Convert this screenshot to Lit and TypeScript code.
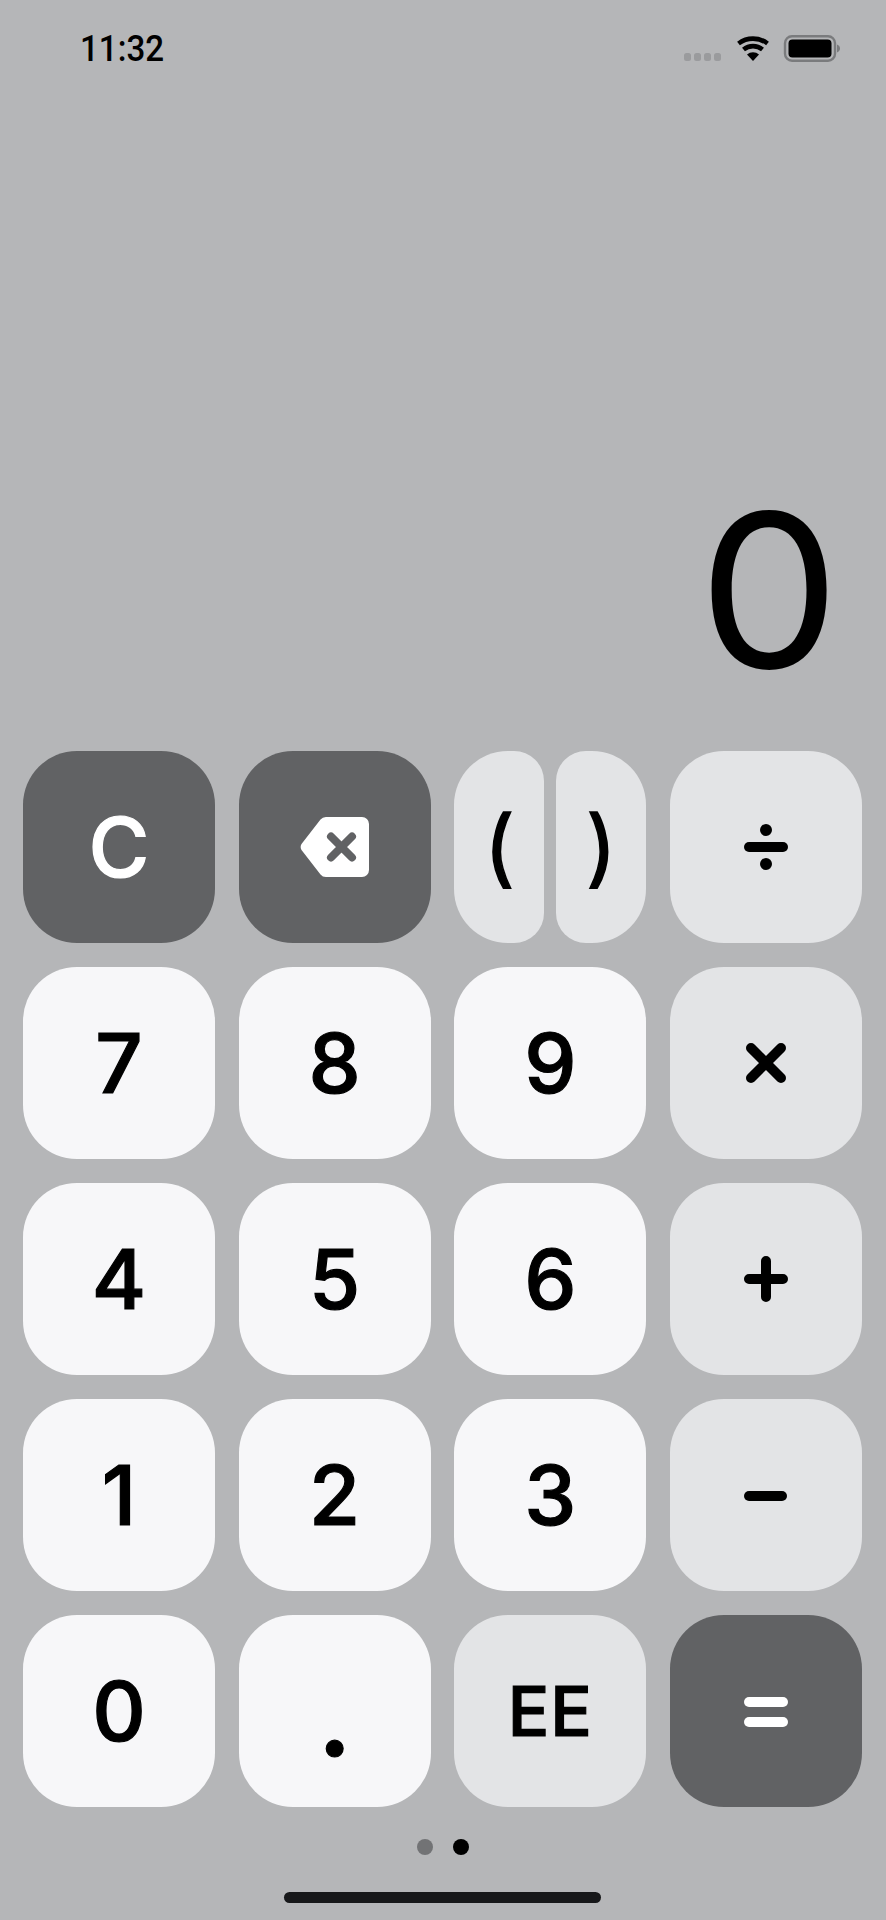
import { LitElement, html, css, svg } from "lit";
import { customElement } from "lit/decorators.js";

type Key = { t: string; k: string; c?: string };

const rows: Key[][] = [
  [
    { t: "C", k: "dark", c: "clear" },
    { t: "", k: "dark", c: "back" },
    { t: "()", k: "split" },
    { t: "÷", k: "op", c: "sym" },
  ],
  [
    { t: "7", k: "num" },
    { t: "8", k: "num" },
    { t: "9", k: "num" },
    { t: "×", k: "op", c: "sym" },
  ],
  [
    { t: "4", k: "num" },
    { t: "5", k: "num" },
    { t: "6", k: "num" },
    { t: "+", k: "op", c: "sym" },
  ],
  [
    { t: "1", k: "num" },
    { t: "2", k: "num" },
    { t: "3", k: "num" },
    { t: "−", k: "op", c: "sym" },
  ],
  [
    { t: "0", k: "num" },
    { t: ".", k: "num", c: "dot" },
    { t: "EE", k: "op", c: "ee" },
    { t: "=", k: "dark", c: "sym" },
  ],
];

@customElement("app-root")
export class AppRoot extends LitElement {
  static styles = css`
    :host {
      display: block;
      width: 886px;
      height: 1920px;
      background: #b5b6b8;
      overflow: hidden;
      font-family: Inter, "Liberation Sans", sans-serif;
      color: #000;
    }
    .status {
      height: 98px;
      display: flex;
      align-items: flex-start;
      justify-content: space-between;
      padding: 0 46px 0 80px;
      box-sizing: border-box;
    }
    .time {
      font-family: Roboto, sans-serif;
      font-size: 36px;
      font-weight: 500;
      line-height: 36px;
      margin-top: 31px;
      transform: scaleX(0.92);
      transform-origin: left center;
    }
    .icons {
      display: flex;
      align-items: flex-start;
      margin-top: 35px;
    }
    .display {
      height: 653px;
      display: flex;
      justify-content: flex-end;
      align-items: flex-end;
      padding-right: 46px;
      box-sizing: border-box;
    }
    .big {
      font-size: 214px;
      font-weight: 400;
      line-height: 214px;
      margin-bottom: 53px;
      transform: scaleX(1.05);
      transform-origin: right center;
    }
    .pad {
      display: grid;
      grid-template-columns: repeat(4, 192px);
      grid-auto-rows: 192px;
      column-gap: 23.67px;
      row-gap: 24px;
      padding-left: 23px;
    }
    .key {
      border-radius: 54px;
      display: flex;
      align-items: center;
      justify-content: center;
      font-size: 83px;
      font-weight: 500;
      line-height: 1;
      -webkit-text-stroke: 1.2px currentColor;
    }
    .num { background: #f7f7f9; color: #000; }
    .op { background: #e3e4e6; color: #000; }
    .dark { background: #616264; color: #fff; }
    .split {
      display: flex;
      gap: 12px;
    }
    .half {
      flex: 1;
      background: #e3e4e6;
      display: flex;
      align-items: center;
      justify-content: center;
      font-size: 84px;
      font-weight: 400;
      line-height: 1;
      -webkit-text-stroke: 1.500px currentColor;
    }
    .half.l { border-radius: 54px 30px 30px 54px; }
    .half.r { border-radius: 30px 54px 54px 30px; }
    .ee { font-size: 69px; letter-spacing: 1px; }
    .dot { font-size: 100px; font-weight: 700; padding-top: 18px; box-sizing: border-box; }
    .sym svg { display: block; }
    .pager {
      display: flex;
      justify-content: center;
      gap: 20px;
      margin-top: 32px;
    }
    .pager i {
      display: block;
      width: 16px;
      height: 16px;
      border-radius: 50%;
      background: #000;
    }
    .pager i.off { background: #727375; }
    .home {
      width: 317px;
      height: 11px;
      border-radius: 6px;
      background: #17181a;
      margin: 37px 0 0 284px;
    }
  `;

  private back() {
    return html`<svg width="72" height="60" viewBox="0 0 72 60" aria-hidden="true">
      <path fill="#fff" d="M27 0H63a7 7 0 0 1 7 7V53a7 7 0 0 1-7 7H27a7 7 0 0 1-5.500-2.600L2.500 33a6 6 0 0 1 0-6L21.500 2.600A7 7 0 0 1 27 0Z"/>
      <path fill="none" stroke="#616264" stroke-width="8" stroke-linecap="round" d="M32 19.500 53 40.500M53 19.500 32 40.500"/>
    </svg>`;
  }

  private sym(t: string) {
    const shape: Record<string, unknown> = {
      "÷": svg`<rect x="3" y="25" width="44" height="10" rx="5"/><ellipse cx="25" cy="13" rx="6" ry="6"/><ellipse cx="25" cy="47" rx="6" ry="6"/>`,
      "×": svg`<path d="M10 15 40 45M40 15 10 45" stroke="#000" stroke-width="10" stroke-linecap="round"/>`,
      "+": svg`<path d="M8 30H42M25 12V48" stroke="#000" stroke-width="10" stroke-linecap="round"/>`,
      "−": svg`<rect x="3" y="26" width="43" height="10" rx="5"/>`,
      "=": svg`<rect x="3" y="16" width="44" height="10" rx="5" fill="#fff"/><rect x="3" y="36" width="44" height="10" rx="5" fill="#fff"/>`,
    };
    return html`<span role="img" aria-label=${t}><svg width="50" height="60" viewBox="0 0 50 60">${shape[t]}</svg></span>`;
  }

  private renderKey(key: Key) {
    if (key.k === "split") {
      return html`<div class="split"><div class="half l">(</div><div class="half r">)</div></div>`;
    }
    const cls = `key ${key.k} ${key.c ?? ""}`;
    if (key.c === "back") return html`<div class=${cls}>${this.back()}</div>`;
    if (key.c === "sym") return html`<div class=${cls}>${this.sym(key.t)}</div>`;
    return html`<div class=${cls}>${key.t}</div>`;
  }

  render() {
    return html`
      <div class="status">
        <div class="time">11:32</div>
        <div class="icons">
          <svg width="160" height="27" viewBox="0 0 160 27" aria-hidden="true">
            <g fill="#9a9b9d">
              <rect x="4" y="18" width="7" height="8" rx="2.500"/>
              <rect x="14" y="18" width="7" height="8" rx="2.500"/>
              <rect x="24" y="18" width="7" height="8" rx="2.500"/>
              <rect x="34" y="18" width="7" height="8" rx="2.500"/>
            </g>
            <g fill="none" stroke="#000" stroke-width="4.600">
              <path d="M58.500 8.500a24 24 0 0 1 29 0"/>
              <path d="M63.500 14.500a15 15 0 0 1 19 0"/>
            </g>
            <path d="M67 19.500a9 9 0 0 1 12 0L73 26Z" fill="#000"/>
            <rect x="105" y="1.200" width="50" height="24.500" rx="7" fill="none" stroke="#7a7b7d" stroke-width="2.400"/>
            <rect x="108.500" y="4.500" width="43" height="18" rx="4" fill="#000"/>
            <path d="M157 9.500c2 .8 3 2.200 3 4s-1 3.200-3 4Z" fill="#7a7b7d"/>
          </svg>
        </div>
      </div>
      <div class="display"><div class="big">0</div></div>
      <div class="pad">${rows.flat().map((k) => this.renderKey(k))}</div>
      <div class="pager"><i class="off"></i><i></i></div>
      <div class="home"></div>
    `;
  }
}
